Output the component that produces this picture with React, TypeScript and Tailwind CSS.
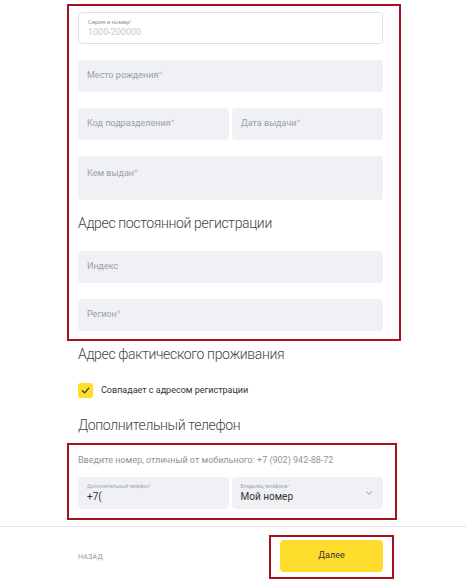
import React from "react";

function Field({ label, className = "" }: { label: string; className?: string }) {
  return (
    <div className={`flex h-8 items-center rounded-[4px] bg-[#eff1f4] px-[9px] ${className}`}>
      <span className="text-[9px] text-[#9aa0a8]">
        {label}
        <span className="text-[#e3b9b9]">*</span>
      </span>
    </div>
  );
}

export default function App() {
  return (
    <main
      className="h-[580px] w-[466px] overflow-hidden bg-white text-[#333]"
      style={{ fontFamily: "Roboto, 'Liberation Sans', sans-serif" }}
    >
      <div className="ml-[67px] mt-1 w-[334px] border-2 border-[#a3131d] pb-[8px] pl-[9px] pr-[16px] pt-[6px]">
        <div className="flex h-8 flex-col justify-center rounded-[4px] border border-[#dde1e6] bg-white px-[9px]">
          <span className="text-[6px] leading-[8px] text-[#8d939b]">
            Серия и номер<span className="text-[#e3b9b9]">*</span>
          </span>
          <span className="text-[9px] leading-[12px] text-[#c3c7cc]">1000-200000</span>
        </div>
        <Field label="Место рождения" className="mt-4" />
        <div className="mt-4 flex gap-[3px]">
          <Field label="Код подразделения" className="flex-1" />
          <Field label="Дата выдачи" className="flex-1" />
        </div>
        <div className="mt-4 h-11 rounded-[4px] bg-[#eff1f4] px-[9px] pt-[12px] text-[9px] leading-[10px] text-[#9aa0a8]">
          Кем выдан<span className="text-[#e3b9b9]">*</span>
        </div>
        <h2 className="mt-[12px] text-[14px] font-light leading-[22px] tracking-[-0.025em] text-[#444]">
          Адрес постоянной регистрации
        </h2>
        <div className="mt-[17px] flex h-8 items-center rounded-[4px] bg-[#eff1f4] px-[9px]">
          <span className="text-[9px] text-[#9aa0a8]">Индекс</span>
        </div>
        <Field label="Регион" className="mt-4" />
      </div>

      <div className="ml-[78px] w-[305px]">
        <h2 className="mt-[2px] text-[14px] font-light leading-[22px] tracking-[-0.025em] text-[#444]">
          Адрес фактического проживания
        </h2>
        <div className="mt-[18px] flex items-center gap-[8px]">
          <span className="flex h-[15px] w-[15px] items-center justify-center rounded-[3px] bg-[#ffdd2d]">
            <svg width="9" height="9" viewBox="0 0 10 10" fill="none">
              <path d="M1.5 5.2 L4 7.6 L8.6 2.4" stroke="#333" strokeWidth="1.4" strokeLinecap="round" strokeLinejoin="round" />
            </svg>
          </span>
          <span className="text-[9px] text-[#333]">Совпадает с адресом регистрации</span>
        </div>
        <h2 className="mt-[16px] text-[14px] font-light leading-[22px] tracking-[-0.025em] text-[#444]">
          Дополнительный телефон
        </h2>
      </div>

      <div className="ml-[67px] mt-[7px] w-[330px] border-2 border-[#a3131d] pb-[9px] pl-[9px] pr-[12px] pt-[9px]">
        <p className="text-[9px] leading-[12px] text-[#8d939b]">
          Введите номер, отличный от мобильного: +7 (902) 942-88-72
        </p>
        <div className="mt-[11px] flex gap-[3px]">
          <div className="flex h-8 flex-1 flex-col justify-center rounded-[4px] bg-[#eff1f4] px-[9px]">
            <span className="text-[5px] leading-[7px] text-[#a0a6ad]">
              Дополнительный телефон<span className="text-[#e3b9b9]">*</span>
            </span>
            <span className="text-[10px] leading-[13px] text-[#333]">+7(</span>
          </div>
          <div className="flex h-8 flex-1 items-center rounded-[4px] bg-[#eff1f4] pl-[9px] pr-[10px]">
            <div className="flex flex-1 flex-col">
              <span className="text-[5px] leading-[7px] text-[#a0a6ad]">
                Владелец телефона<span className="text-[#e3b9b9]">*</span>
              </span>
              <span className="text-[10px] leading-[13px] text-[#333]">Мой номер</span>
            </div>
            <svg width="8" height="6" viewBox="0 0 8 6" fill="none">
              <path d="M1.5 1.8 L4 4.2 L6.5 1.8" stroke="#b0b5bb" strokeWidth="1.1" strokeLinecap="round" strokeLinejoin="round" />
            </svg>
          </div>
        </div>
      </div>

      <div className="mt-[6px] h-px w-full bg-[#dfe3e8]" />

      <div className="mt-[8px] flex items-center">
        <span className="ml-[78px] text-[7px] uppercase tracking-[0.04em] text-[#8d939b]">назад</span>
        <div className="ml-auto mr-[72px] border-2 border-[#a3131d] px-[9px] pb-[5px] pt-[3px]">
          <button className="flex h-8 w-[103px] items-center justify-center rounded-[4px] bg-[#ffdd2d] text-[9px] text-[#333]">
            Далее
          </button>
        </div>
      </div>
    </main>
  );
}
